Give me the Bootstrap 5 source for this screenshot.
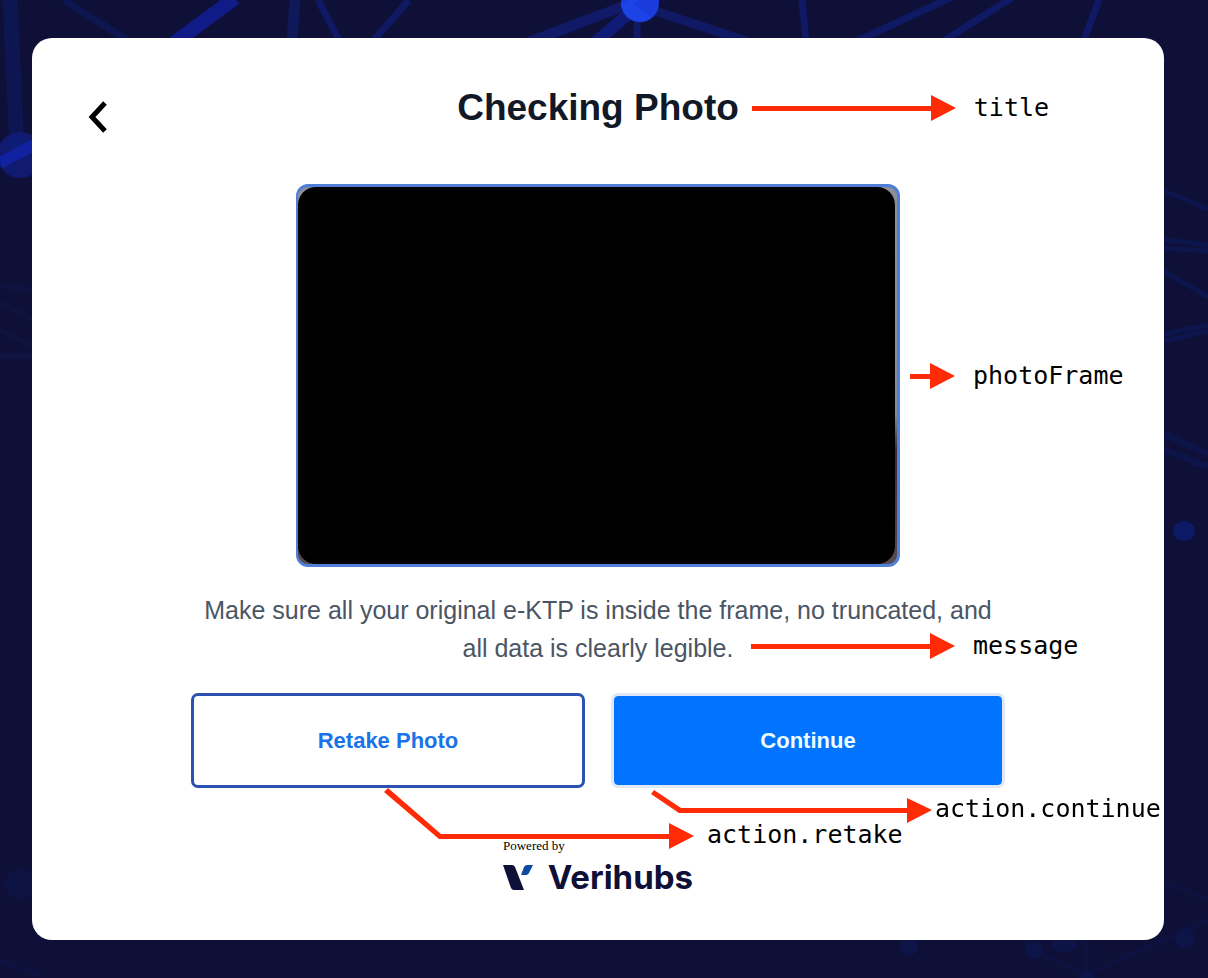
<!DOCTYPE html>
<html lang="en">
<head>
<meta charset="utf-8">
<meta name="viewport" content="width=device-width, initial-scale=1">
<title>Checking Photo</title>
<link href="https://cdn.jsdelivr.net/npm/bootstrap@5.3.0/dist/css/bootstrap.min.css" rel="stylesheet">
<style>
  body { background: #0f1038; font-family: "Liberation Sans", Arial, sans-serif; }
  .backdrop { z-index: -1; }
  .page { padding: 38px 44px 38px 32px; }
  .panel { border-radius: 20px; padding: 48px 56px; }
  .panel-head { display: grid; grid-template-columns: 1fr auto 1fr; align-items: start; margin-bottom: 51px; }
  .back { margin-top: 15px; line-height: 0; justify-self: start; }
  .title { font-size: 37px; line-height: 44px; color: #111827; }
  .photo-frame { max-width: 604px; height: 383px; border: 3px solid #4f7fd6; border-left-width: 2px; border-radius: 12px; background: linear-gradient(#8b9099, #7f8a9a 60%, #3a2a35 70%, #574a52); }
  .photo { height: 100%; margin-right: 2px; border-radius: 18px; background: #000; }
  .message { max-width: 814px; margin-top: 24px; margin-bottom: 26px; font-size: 25px; line-height: 38px; color: #4b5563; }
  .actions { max-width: 814px; gap: 26px; }
  .action { height: 95px; border-width: 3px; border-radius: 7px; font-size: 22px; font-weight: 700; }
  .action-retake, .action-retake:hover { color: #1a73e8; border-color: #2b52b0; background: #fff; }
  .action-continue, .action-continue:hover { color: #eefcff; border-color: #dfe8f3; background: #0073ff; background-clip: padding-box; }
  .brand { width: 190px; margin-top: 50px; color: #0f1038; }
  .powered { font: 13px/16px "Liberation Serif", "Times New Roman", serif; color: #000; }
  .wordmark { font: 700 33px/30px Inter, sans-serif; }
  .note { z-index: 2; gap: 18px; color: #000; font: 25px/30px "DejaVu Sans Mono", monospace; white-space: nowrap; pointer-events: none; }
  .note svg { flex: none; fill: #ff2b06; }
  .note-side { top: 50%; left: 100%; transform: translateY(-50%); margin-left: 13px; }
  .note-message { bottom: 6px; left: 50%; margin-left: 153px; }
  .note-retake { top: 100%; left: 50%; gap: 13px; margin-left: -4px; }
  .note-continue { top: 100%; left: 0; gap: 3px; margin-left: 36px; }
</style>
</head>
<body>
<svg class="backdrop position-fixed top-0 start-0 w-100 h-100" viewBox="0 0 1208 978" preserveAspectRatio="xMidYMid slice" aria-hidden="true">
  <g fill="none" stroke="#101b78">
    <path d="M10 0L17 150" stroke="#0d1650" stroke-width="15"/>
    <path d="M64 0L130 42" stroke="#0e1650" stroke-width="7"/>
    <path d="M235-2L170 46" stroke="#101b88" stroke-width="14"/>
    <path d="M295 0L292 42" stroke="#0f1859" stroke-width="11"/>
    <path d="M318 0L340 42M409 0L372 42" stroke="#0f1964" stroke-width="7"/>
    <path d="M640 0L480 60M640 0L515 48" stroke="#101a66" stroke-width="10"/>
    <path d="M640 4L575 60" stroke-width="12"/>
    <path d="M640 6L755 44" stroke="#0f1964" stroke-width="9"/>
    <path d="M637 0V42M802 0L806 42M952 -3L855 42M1013 -3L942 42M1099 0L1082 45" stroke="#0f1964" stroke-width="7"/>
    <path d="M0 285L34 291M0 303L34 320M0 330L34 347M0 356H34" stroke="#0e133f" stroke-width="6"/>
    <path d="M1160 189L1208 209M1160 239L1208 245M1160 248L1208 251M1160 269L1208 297M1160 335L1208 325M1160 342L1208 331" stroke="#0c154c" stroke-width="5"/>
    <path d="M1160 432L1208 454M1160 448L1208 467" stroke="#0d1548" stroke-width="7"/>
    <path d="M0 887L34 880M0 960L40 976M1030 948L1085 975M1085 975L1208 920M1208 900L1160 880M1087 940V978" stroke="#0e1240" stroke-width="4"/>
  </g>
  <circle cx="640" cy="3" r="19" fill="#1a3cdc"/>
  <path d="M621 3A19 19 0 0 0 652 18L634 4L640-4Z" fill="#1c4af0" opacity=".5"/>
  <circle cx="20" cy="155" r="23" fill="#111f86" opacity=".7"/>
  <path d="M0 163L34 145" stroke="#1122a0" stroke-width="12"/>
  <ellipse cx="1184" cy="531" rx="11" ry="10" fill="#0e1a66"/>
  <circle cx="20" cy="884" r="15" fill="#0d1343"/>
  <g fill="#0d1448"><circle cx="909" cy="947" r="9"/><circle cx="1034" cy="950" r="9"/><ellipse cx="1064" cy="945" rx="13" ry="7"/><circle cx="1185" cy="938" r="10"/><circle cx="1087" cy="978" r="8"/></g>
</svg>

<main class="page">
  <section class="panel bg-white">
    <header class="panel-head">
      <button type="button" class="back btn border-0 p-0" aria-label="Back">
        <svg width="20" height="32" viewBox="0 0 20 32" fill="none" stroke="#000" stroke-width="5" aria-hidden="true"><path d="M17 2L4 16L17 30"/></svg>
      </button>
      <h1 class="title fw-bold mb-0 position-relative">Checking Photo
        <span class="note note-side position-absolute d-none d-lg-flex align-items-center">
          <svg width="204" height="26" aria-hidden="true"><path d="M0 11H179V0L204 13L179 26V16H0Z"/></svg>title
        </span>
      </h1>
    </header>

    <div class="photo-frame mx-auto position-relative">
      <div class="photo" role="img" aria-label="Captured photo"></div>
      <span class="note note-side position-absolute d-none d-lg-flex align-items-center">
        <svg width="45" height="26" aria-hidden="true"><path d="M0 11H20V0L45 13L20 26V16H0Z"/></svg>photoFrame
      </span>
    </div>

    <div class="position-relative">
      <p class="message text-center mx-auto">Make sure all your original e-KTP is inside the frame, no truncated, and all data is clearly legible.</p>
      <span class="note note-message position-absolute d-none d-lg-flex align-items-center">
        <svg width="204" height="26" aria-hidden="true"><path d="M0 11H179V0L204 13L179 26V16H0Z"/></svg>message
      </span>
    </div>

    <div class="actions d-flex mx-auto">
      <div class="position-relative flex-fill w-50">
        <button type="button" class="action action-retake btn w-100">Retake Photo</button>
        <span class="note note-retake position-absolute d-none d-lg-flex align-items-end">
          <svg width="310" height="62" aria-hidden="true"><path d="M4 0L57 46H285V35L310 48L285 61V51H55L0 4Z"/></svg>action.retake
        </span>
      </div>
      <div class="position-relative flex-fill w-50">
        <button type="button" class="action action-continue btn w-100">Continue</button>
        <span class="note note-continue position-absolute d-none d-lg-flex align-items-end">
          <svg width="285" height="36" aria-hidden="true"><path d="M7 2L34 20H260V10L285 22L260 35V25H32L4 6Z"/></svg>action.continue
        </span>
      </div>
    </div>

    <footer class="brand mx-auto">
      <div class="powered mb-2">Powered by</div>
      <div class="d-flex align-items-center justify-content-between">
        <svg width="30" height="26" viewBox="0 0 30 26" aria-hidden="true"><path fill="#0f1038" d="M0 1H9Q11 1 12 3L21 26H11Q9 26 8 24Z"/><path fill="#0b4a9c" d="M18 11L21 3Q22 1 24 1H30L26 9Q25 11 23 11Z"/></svg>
        <span class="wordmark">Verihubs</span>
      </div>
    </footer>
  </section>
</main>
<script src="https://cdn.jsdelivr.net/npm/bootstrap@5.3.0/dist/js/bootstrap.bundle.min.js"></script>
</body>
</html>
